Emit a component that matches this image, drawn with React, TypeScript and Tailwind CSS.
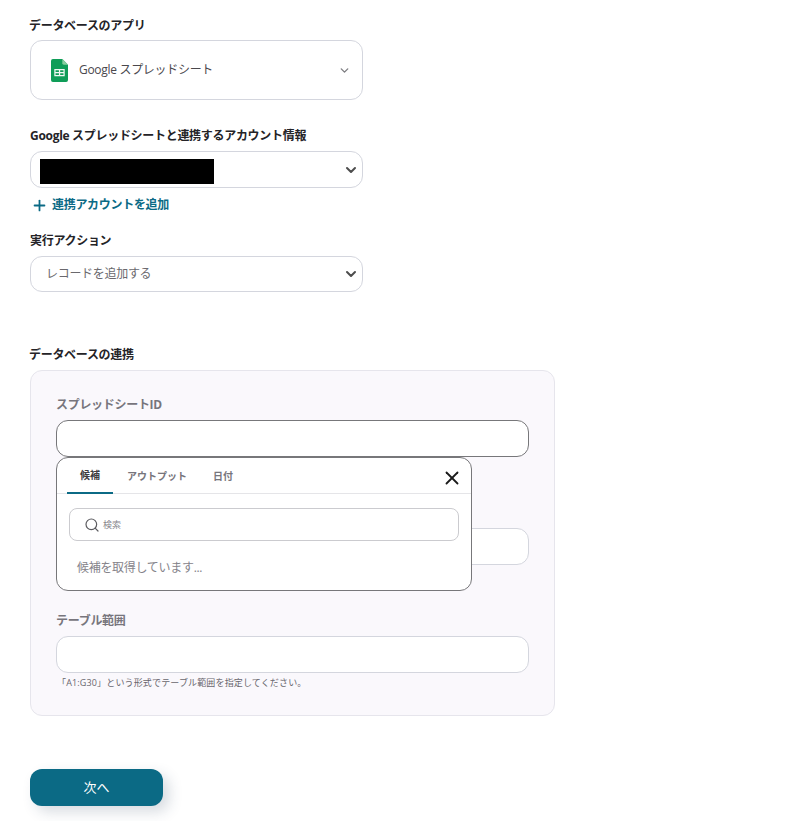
import { Plus, Search, X, ChevronDown } from "lucide-react";

const font = "font-['Open_Sans','Noto_Sans_CJK_JP',sans-serif]";

function Sheets() {
  return (
    <svg width="17" height="23" viewBox="0 0 18 24" preserveAspectRatio="none" className="shrink-0">
      <path d="M2 0h10l6 6v16a2 2 0 0 1-2 2H2a2 2 0 0 1-2-2V2a2 2 0 0 1 2-2z" fill="#0f9d58" />
      <path d="M12 0l6 6h-4.500A1.500 1.500 0 0 1 12 4.500z" fill="#87ce9f" />
      <path d="M3.500 10.500h11v7.500h-11zM4.800 11.800v1.800h3.600v-1.800zm4.900 0v1.800h3.500v-1.800zm-4.900 3v1.900h3.600v-1.900zm4.900 0v1.900h3.500v-1.900z" fill="#f1f8f3" fillRule="evenodd" />
    </svg>
  );
}

function SelectBox({ children, short }: { children: React.ReactNode; short?: boolean }) {
  return (
    <div className={`w-[333px] ${short ? "h-[36px]" : "h-[37px]"} flex items-center justify-between rounded-xl border border-[#d4d6de] bg-white pl-[9px] pr-[3px]`}>
      {children}
      <ChevronDown size={16} strokeWidth={3} className="text-[#4d4d4d]" />
    </div>
  );
}

function Field({ label, hint, active }: { label: string; hint?: string; active?: boolean }) {
  return (
    <div className="flex flex-col">
      <div className="h-[16px] pt-[1px] leading-[16px] text-[12px] tracking-[-0.3px] font-bold text-[#77757c] mb-[8px]">{label}</div>
      <div className={`w-[473px] h-[37px] rounded-xl bg-white border ${active ? "border-[#77777a]" : "border-[#d4d6de]"}`} />
      {hint && <div className="h-[20px] pt-[4px] leading-[12px] pl-[1px] text-[9px] tracking-[0.15px] text-[#68666c]">{hint}</div>}
    </div>
  );
}

export default function App() {
  return (
    <div className={`${font} relative w-[796px] h-[821px] overflow-hidden bg-white pl-[30px] pt-[18px]`}>
      <div className="h-[16px] leading-[16px] text-[12px] tracking-[-0.3px] font-bold text-[#242327] mb-[6px] -ml-[1px]">データベースのアプリ</div>
      <div className="w-[333px] h-[60px] flex items-center justify-between rounded-xl border border-[#d4d6de] bg-white pl-[20px] pr-[11px]">
        <div className="flex items-center gap-[11px]">
          <Sheets />
          <span className="text-[12px] tracking-[-0.3px] text-[#4a484d]">Google スプレッドシート</span>
        </div>
        <ChevronDown size={13} strokeWidth={2.500} className="text-[#7d7d80]" />
      </div>

      <div className="h-[16px] leading-[16px] text-[12px] tracking-[-0.3px] font-bold text-[#242327] mt-[28px] mb-[7px]">Google スプレッドシートと連携するアカウント情報</div>
      <SelectBox>
        <div className="w-[174px] h-[25px] mt-[4px] bg-black" />
      </SelectBox>
      <div className="flex items-center h-[16px] mt-[9px] pl-[1px] gap-[4px] text-[12px] tracking-[-0.3px] font-bold text-[#0b6a85]">
        <Plus size={17} strokeWidth={2.500} />
        <span className="leading-[16px]">連携アカウントを追加</span>
      </div>
      <div className="h-[16px] leading-[16px] text-[12px] tracking-[-0.3px] font-bold text-[#242327] mt-[20px] mb-[7px]">実行アクション</div>
      <SelectBox short>
        <span className="pl-[6px] text-[12px] tracking-[-0.3px] text-[#6a686d]">レコードを追加する</span>
      </SelectBox>

      <div className="h-[16px] leading-[16px] text-[12px] tracking-[-0.3px] font-bold text-[#242327] mt-[55px] mb-[7px] -ml-[1px]">データベースの連携</div>
      <div className="relative w-[525px] h-[346px] rounded-xl border border-[#e6e5ec] bg-[#faf8fc] pl-[25px] pt-[25px]">
        <Field label="スプレッドシートID" active />
        <div className="mt-[47px]">
          <Field label="" />
        </div>
        <div className="mt-[47px]">
          <Field label="テーブル範囲" hint="「A1:G30」という形式でテーブル範囲を指定してください。" />
        </div>

        <div className="absolute left-[25px] top-[86px] w-[416px] h-[134px] rounded-xl border border-[#77777a] bg-white">
          <div className="relative flex h-[36px] border-b border-[#e5e5e8] pl-[10px]">
            <div className="w-[46px] h-[36px] pt-[1px] flex items-center justify-center text-[10px] font-bold text-[#3d3c40] border-b-[2px] border-[#0b6a85]">候補</div>
            <div className="w-[74px] h-[35px] pt-[2px] ml-[7px] flex items-center justify-center text-[10px] font-bold text-[#77757c]">アウトプット</div>
            <div className="w-[46px] h-[35px] pt-[2px] ml-[6px] flex items-center justify-center text-[10px] font-bold text-[#77757c]">日付</div>
            <X size={22} strokeWidth={2} className="absolute right-[8px] top-[9px] text-[#1a1a1a]" />
          </div>
          <div className="flex items-center w-[390px] h-[33px] mt-[14px] ml-[12px] rounded-lg border border-[#cbcbcf] pl-[14px] gap-[3px]">
            <Search size={16} strokeWidth={1.800} className="text-[#5c5c60]" />
            <span className="text-[9px] text-[#88868c]">検索</span>
          </div>
          <div className="pl-[20px] mt-[18px] leading-[18px] text-[12px] tracking-[-0.3px] text-[#85838a]">候補を取得しています...</div>
        </div>
      </div>

      <button className="block w-[133px] h-[37px] mt-[53px] rounded-xl bg-[#0b6a85] text-[13px] text-white shadow-[6px_6px_14px_rgba(40,60,90,0.180)]">次へ</button>
    </div>
  );
}
